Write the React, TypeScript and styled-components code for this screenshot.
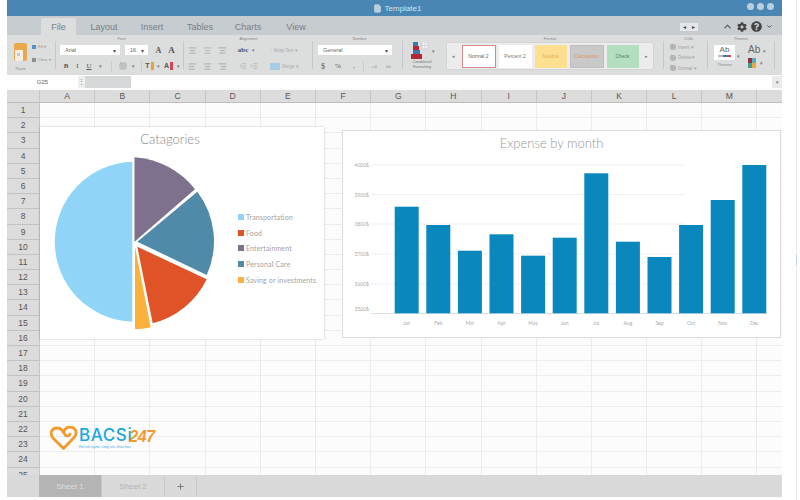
import styled, { createGlobalStyle } from "styled-components";
import { AlignCenter, AlignLeft, AlignRight, ChevronDown, ChevronUp, FileText, Grid3x3, IndentDecrease, IndentIncrease, Plus, Table } from "lucide-react";
import { FaCog, FaQuestionCircle } from "react-icons/fa";

const GlobalStyle = createGlobalStyle`
  html, body {
    margin: 0;
    padding: 0;
    background: #fff;
  }
  * {
    box-sizing: border-box;
  }
`;

const TABS = ["Layout", "Insert", "Tables", "Charts", "View"];
const COLUMNS = ["A", "B", "C", "D", "E", "F", "G", "H", "I", "J", "K", "L", "M", ""];
const ROWS = Array.from({ length: 25 }, (_, i) => i + 1);

const LEGEND = [
  { label: "Transportation", color: "#90d5f7" },
  { label: "Food", color: "#df5327" },
  { label: "Entertainment", color: "#7d718d" },
  { label: "Personal Care", color: "#4f8aa8" },
  { label: "Saving or investments", color: "#fbb03b" },
];

const STYLES = [
  { label: "Normal 2", bg: "#fff", fg: "#666", border: "#cf8a8a", width: 34 },
  { label: "Percent 2", bg: "#fff", fg: "#777", border: "#fff", width: 33 },
  { label: "Neutral", bg: "#fcdf90", fg: "#e6b04e", border: "#fcdf90", width: 32 },
  { label: "Calculation", bg: "#c9c9c9", fg: "#e0945e", border: "#bdbdbd", width: 34 },
  { label: "Check", bg: "#b3dfc0", fg: "#4f8565", border: "#b3dfc0", width: 32 },
];

// top of each bar, in page pixels
const BARS = [
  { month: "Jan", top: 206.7 },
  { month: "Feb", top: 225 },
  { month: "Mar", top: 250.7 },
  { month: "Apr", top: 234.3 },
  { month: "May", top: 255.7 },
  { month: "Jun", top: 237.7 },
  { month: "Jul", top: 173.3 },
  { month: "Aug", top: 241.7 },
  { month: "Sep", top: 257 },
  { month: "Oct", top: 225 },
  { month: "Nov", top: 200 },
  { month: "Dec", top: 165 },
];

const TICKS = [
  { label: "4000$", y: 165 },
  { label: "3900$", y: 194.5 },
  { label: "3800$", y: 224 },
  { label: "3700$", y: 254 },
  { label: "3600$", y: 284 },
  { label: "3500$", y: 309 },
];

const App = () => {
  return (
    <Page>
      <GlobalStyle />
      <Window>
        <TitleBar>
          <TitleText>
            <FileText size={9} fill="#b9cfdf" color="#b9cfdf" />
            Template1
          </TitleText>
          <Dots>
            <Dot />
            <Dot />
            <Dot />
          </Dots>
        </TitleBar>

        <TabBar>
          <ActiveTab>File</ActiveTab>
          {TABS.map((tab) => (
            <Tab key={tab}>{tab}</Tab>
          ))}
          <TabTools>
            <Pager>
              <span>◂</span>
              <span>▸</span>
            </Pager>
            <ChevronUp size={11} color="#555" strokeWidth={2.5} />
            <FaCog size={10} color="#444" />
            <FaQuestionCircle size={11} color="#444" />
            <ChevronDown size={7} color="#444" strokeWidth={3} />
          </TabTools>
        </TabBar>

        <Ribbon>
          <Group $w={42}>
            <ClipRow>
              <PasteBox>
                <svg width="13" height="19" viewBox="0 0 13 19">
                  <rect x="0" y="0" width="13" height="18" rx="2" fill="#eaa84e" />
                  <rect x="1" y="7" width="8" height="11" fill="#f1eee6" />
                  <rect x="3" y="10" width="3" height="3" fill="#bcc6d4" />
                </svg>
                <Tiny>Paste</Tiny>
              </PasteBox>
              <ClipActions>
                <ClipAction>
                  <Swatch $color="#5b8fc7" />
                  Fill ▾
                </ClipAction>
                <ClipAction>
                  <Swatch $color="#8a8f96" />
                  Clear ▾
                </ClipAction>
              </ClipActions>
            </ClipRow>
          </Group>
          <Sep />

          <Group $w={127}>
            <GroupLabel>Font</GroupLabel>
            <ToolRow>
              <Select $w={60}>
                Arial<b>▾</b>
              </Select>
              <Slot $w={5} />
              <Select $w={23}>
                16<b>▾</b>
              </Select>
              <Slot $w={4} />
              <Slot $w={13}>
                <Glyph $size={8}>A</Glyph>
              </Slot>
              <Slot $w={13}>
                <Glyph $size={9}>A</Glyph>
              </Slot>
            </ToolRow>
            <ToolRow>
              <Slot $w={12}><Glyph $size={7}>B</Glyph></Slot>
              <Slot $w={11}><Glyph $size={7} $weight={400}>I</Glyph></Slot>
              <Slot $w={12}><Glyph $size={7} $weight={400} $line>U</Glyph></Slot>
              <Slot $w={10}><Caret>▾</Caret></Slot>
              <Slot $w={13}><MiniSep /></Slot>
              <Slot $w={10}><Grid3x3 size={8} color="#aaa" /></Slot>
              <Slot $w={10}><Caret>▾</Caret></Slot>
              <Slot $w={7}><MiniSep /></Slot>
              <Slot $w={9}><ColorMark $color="#f0a030">T</ColorMark></Slot>
              <Slot $w={9}><Caret>▾</Caret></Slot>
              <Slot $w={11}><ColorMark $color="#d8434f">A</ColorMark></Slot>
              <Slot $w={8}><Caret>▾</Caret></Slot>
            </ToolRow>
          </Group>
          <Sep />

          <Group $w={128} $pad={1}>
            <GroupLabel>Alignment</GroupLabel>
            <ToolRow>
              <Slot $w={15}><AlignCenter size={9} color="#999" /></Slot>
              <Slot $w={15}><AlignCenter size={9} color="#aaa" /></Slot>
              <Slot $w={14}><AlignCenter size={9} color="#999" /></Slot>
              <Slot $w={6} />
              <Slot $w={16}><Glyph $size={7}>abc</Glyph></Slot>
              <Slot $w={5}><Caret>▾</Caret></Slot>
              <Slot $w={14} />
              <Faded>↑ Wrap Text ▾</Faded>
            </ToolRow>
            <ToolRow>
              <Slot $w={15}><AlignLeft size={9} color="#999" /></Slot>
              <Slot $w={15}><AlignCenter size={9} color="#999" /></Slot>
              <Slot $w={14}><AlignRight size={9} color="#999" /></Slot>
              <Slot $w={8} />
              <Slot $w={11}><IndentDecrease size={8} color="#aaa" /></Slot>
              <Slot $w={11}><IndentIncrease size={8} color="#aaa" /></Slot>
              <Slot $w={11} />
              <MergeIcon />
              <Faded>Merge ▾</Faded>
            </ToolRow>
          </Group>
          <Sep />

          <Group $w={89}>
            <GroupLabel>Number</GroupLabel>
            <ToolRow>
              <Slot $w={1} />
              <Select $w={74}>
                General<b>▾</b>
              </Select>
            </ToolRow>
            <ToolRow>
              <Slot $w={12}><Glyph $size={8} $weight={400}>$</Glyph></Slot>
              <Slot $w={18}><Glyph $size={7} $weight={400}>%</Glyph></Slot>
              <Slot $w={14}><Glyph $size={7} $weight={400}>,</Glyph></Slot>
              <Slot $w={4}><MiniSep /></Slot>
              <Slot $w={18}><Tiny>+.0</Tiny></Slot>
              <Slot $w={10}><Tiny>.00</Tiny></Slot>
            </ToolRow>
          </Group>
          <Sep />

          <CondGroup>
            <CondIcon>
              <svg width="20" height="18" viewBox="0 0 20 18">
                <rect x="4" y="0" width="5" height="4" fill="#3d79b0" />
                <rect x="4" y="4" width="6" height="4" fill="#b8262f" />
                <rect x="4" y="8" width="7" height="4" fill="#3d79b0" />
                <rect x="2" y="12" width="11" height="5" fill="#b8262f" />
                <path d="M13 0h6v7h-6zM16 0v7M13 3.5h6" fill="#f4f4f4" stroke="#bbb" strokeWidth="0.5" />
              </svg>
              <Caret>▾</Caret>
            </CondIcon>
            <CondLabel>
              Conditional
              <br />
              Formatting
            </CondLabel>
          </CondGroup>

          <StyleWrap>
            <GroupLabel>Format</GroupLabel>
            <StyleBox>
              <Caret>◂</Caret>
              <StyleList>
                {STYLES.map((style) => (
                  <StyleItem
                    key={style.label}
                    $bg={style.bg}
                    $fg={style.fg}
                    $border={style.border}
                    $w={style.width}
                  >
                    {style.label}
                  </StyleItem>
                ))}
              </StyleList>
              <Caret>▸</Caret>
            </StyleBox>
          </StyleWrap>
          <Sep />

          <CellsGroup>
            <GroupLabel>Cells</GroupLabel>
            <CellAction><Table size={6} color="#888" /> Insert ▾</CellAction>
            <CellAction><Table size={6} color="#888" /> Delete ▾</CellAction>
            <CellAction><Table size={6} color="#888" /> Format ▾</CellAction>
          </CellsGroup>
          <Sep />

          <ThemesGroup>
            <GroupLabel>Themes</GroupLabel>
            <ThemesRow>
              <div>
                <ThemeBox>
                  Ab
                  <ThemeStrip />
                </ThemeBox>
                <Tiny>Themes</Tiny>
              </div>
              <Caret>▾</Caret>
              <ThemeSide>
                <AbStyle>
                  Ab <Caret>▾</Caret>
                </AbStyle>
                <PaletteRow>
                  <Palette>
                    <Swatch $color="#9c2b45" />
                    <Swatch $color="#4fb0b5" />
                    <Swatch $color="#3f9f8f" />
                    <Swatch $color="#f0a73a" />
                  </Palette>
                  <Caret>▾</Caret>
                </PaletteRow>
              </ThemeSide>
            </ThemesRow>
          </ThemesGroup>
          <Sep />
        </Ribbon>

        <FormulaBar>
          <NameBox>G25</NameBox>
          <Spinner>⋮</Spinner>
          <FormulaGap />
          <FormulaInput />
          <FormulaButton>▾</FormulaButton>
        </FormulaBar>

        <SheetArea>
          <Grid>
            <HeadCell />
            {COLUMNS.map((col, i) => (
              <HeadCell key={i}>{col}</HeadCell>
            ))}
            {ROWS.map((row) =>
              [row.toString(), ...COLUMNS].map((_, i) =>
                i === 0 ? <RowHead key={`${row}-h`}>{row}</RowHead> : <Cell key={`${row}-${i}`} />
              )
            )}
          </Grid>

          <PieCard>
            <PieTitle>Catagories</PieTitle>
            <PieBody>
              <svg width="190" height="188" viewBox="41 151 190 188">
                <path d="M132.3 161.7 A80.04 80.04 0 0 0 132.3 321.7 Z" fill="#90d5f7" />
                <path d="M134.5 241.7 L134.5 157.3 A84 84 0 0 1 195 189.3 Z" fill="#7d718d" />
                <path d="M137.3 241.7 L197.3 191.7 A82 82 0 0 1 206.7 275 Z" fill="#4f8aa8" />
                <path d="M137.3 246.7 L206.7 279.3 A82 82 0 0 1 152.7 323.3 Z" fill="#df5327" />
                <path d="M135 246.7 L150.7 327.3 A82 82 0 0 1 135 329.3 Z" fill="#fbb03b" />
              </svg>
              <Legend>
                {LEGEND.map((item) => (
                  <LegendItem key={item.label}>
                    <LegendMark $color={item.color} />
                    {item.label}
                  </LegendItem>
                ))}
              </Legend>
            </PieBody>
          </PieCard>

          <BarCard>
            <BarTitle>Expense by month</BarTitle>
            <svg width="437" height="180" viewBox="343 157 437 180">
              {TICKS.map((tick, i) => (
                <g key={tick.label}>
                  {i < TICKS.length - 1 && (
                    <line x1="371" x2="685" y1={tick.y} y2={tick.y} stroke="#eeeff1" />
                  )}
                  <AxisText x="369" y={tick.y + 2} textAnchor="end">
                    {tick.label}
                  </AxisText>
                </g>
              ))}
              <line x1="371" x2="767" y1="313.5" y2="313.5" stroke="#d8dde2" />
              {BARS.map((bar, i) => {
                const x = 394.7 + i * 31.6;
                return (
                  <g key={bar.month}>
                    <rect x={x} y={bar.top} width="24" height={313.3 - bar.top} fill="#0a88bd" />
                    <AxisText x={x + 12} y="325" textAnchor="middle">
                      {bar.month}
                    </AxisText>
                  </g>
                );
              })}
            </svg>
          </BarCard>

          <Logo>
            <svg width="28" height="24" viewBox="0 0 28 24">
              <path
                d="M13.5 22.5 L3 12 C-1 7 2 2 7 2 C10 2 12 3.5 13 6 M13.5 22.5 L24.5 11 C28 6 25 1 20 1 C15.5 1 13 5 14.5 8 C15.5 10.5 19 10.5 20 8"
                fill="none"
                stroke="#f39a2d"
                strokeWidth="2.8"
                strokeLinecap="round"
              />
            </svg>
            <LogoText>
              <LogoName>BACSi</LogoName>
              <LogoTag>Kết nối người cùng sức khỏe bạn</LogoTag>
            </LogoText>
            <LogoNumber>247</LogoNumber>
          </Logo>
        </SheetArea>

        <SheetTabs>
          <TabSpacer />
          <SheetTab $active>Sheet 1</SheetTab>
          <SheetTab>Sheet 2</SheetTab>
          <AddSheet>
            <Plus size={9} color="#777" strokeWidth={2.5} />
          </AddSheet>
        </SheetTabs>
      </Window>
      <EdgeLine />
    </Page>
  );
};

const Page = styled.div`
  display: flex;
  width: 800px;
  height: 500px;
  overflow: hidden;
  padding-left: 7px;
`;

const EdgeLine = styled.div`
  flex: none;
  width: 1px;
  height: 500px;
  margin-left: 14px;
  background: linear-gradient(#e9ebed 0 255px, #c3d2dd 255px 265px, #e9ebed 265px);
`;

const Window = styled.div`
  flex: none;
  display: flex;
  flex-direction: column;
  width: 775px;
  height: 497px;
  overflow: hidden;
  font-family: "Liberation Sans", Arial, sans-serif;
  background: #fcfcfd;
`;

const TitleBar = styled.div`
  position: relative;
  flex: 0 0 16px;
  display: flex;
  align-items: center;
  justify-content: center;
  background: #4a86b3;
`;

const TitleText = styled.div`
  display: flex;
  align-items: center;
  gap: 3px;
  margin-left: 5px;
  font-size: 8px;
  color: #d4e2ec;
`;

const Dots = styled.div`
  position: absolute;
  right: 8px;
  top: 3px;
  display: flex;
  gap: 3px;
`;

const Dot = styled.span`
  width: 7px;
  height: 7px;
  border-radius: 50%;
  background: #b8cfdf;
`;

const TabBar = styled.div`
  flex: 0 0 19px;
  display: flex;
  align-items: flex-end;
  padding-left: 34px;
  background: #c6cccf;
`;

const Tab = styled.div`
  width: 48px;
  height: 17px;
  display: flex;
  align-items: center;
  justify-content: center;
  font-size: 9px;
  color: #7a7f83;
`;

const ActiveTab = styled(Tab)`
  width: 35px;
  margin-right: 4px;
  background: #dcdddd;
  border-radius: 2px 2px 0 0;
`;

const TabTools = styled.div`
  display: flex;
  align-items: center;
  gap: 4px;
  height: 17px;
  margin-left: auto;
  padding-right: 9px;
`;

const Pager = styled.div`
  display: flex;
  justify-content: space-around;
  width: 18px;
  height: 8px;
  margin-right: 20px;
  font-size: 6px;
  line-height: 8px;
  color: #444;
  background: #e4e6e7;
`;

const Ribbon = styled.div`
  flex: 0 0 40px;
  display: flex;
  padding-left: 6px;
  background: #dcdddd;
`;

const Group = styled.div<{ $w: number; $pad?: number }>`
  width: ${(p) => p.$w}px;
  flex: none;
  padding-left: ${(p) => p.$pad ?? 4}px;
`;

const GroupLabel = styled.div`
  height: 7px;
  font-size: 4px;
  line-height: 7px;
  text-align: center;
  color: #888;
`;

const Sep = styled.div`
  flex: none;
  width: 1px;
  height: 28px;
  margin-top: 6px;
  background: #c3c8cb;
`;

const MiniSep = styled.span`
  display: block;
  width: 1px;
  height: 11px;
  background: #c8ccce;
`;

const ToolRow = styled.div`
  display: flex;
  align-items: center;
  height: 16px;
`;

const Slot = styled.div<{ $w: number }>`
  flex: none;
  display: flex;
  align-items: center;
  justify-content: center;
  width: ${(p) => p.$w}px;
`;

const Select = styled.div<{ $w: number }>`
  flex: none;
  display: flex;
  align-items: center;
  justify-content: space-between;
  width: ${(p) => p.$w}px;
  height: 10px;
  padding: 0 4px 0 5px;
  font-size: 5.5px;
  color: #666;
  background: #fff;

  b {
    font-size: 6px;
    font-weight: 400;
    color: #555;
  }
`;

const Glyph = styled.span<{ $size: number; $weight?: number; $line?: boolean }>`
  font-family: "Liberation Serif", serif;
  font-size: ${(p) => p.$size}px;
  font-weight: ${(p) => p.$weight ?? 700};
  color: #555;
  text-decoration: ${(p) => (p.$line ? "underline" : "none")};
  white-space: nowrap;
`;

const AbStyle = styled.span`
  font-size: 10px;
  line-height: 11px;
  color: #666;
  white-space: nowrap;
`;

const Caret = styled.span`
  font-size: 5px;
  color: #777;
`;

const Tiny = styled.div`
  font-size: 4px;
  line-height: 5px;
  text-align: center;
  color: #888;
`;

const Faded = styled.span`
  font-size: 4.5px;
  color: #a8acaf;
  white-space: nowrap;
`;

const ColorMark = styled.span<{ $color: string }>`
  font-size: 7px;
  font-weight: 700;
  line-height: 8px;
  color: #555;
  border-right: 3px solid ${(p) => p.$color};
  padding-right: 1px;
`;

const MergeIcon = styled.span`
  width: 10px;
  height: 7px;
  margin-right: 2px;
  background: #a8cbe4;
`;

const ClipRow = styled.div`
  display: flex;
  gap: 5px;
  padding-top: 8px;
  margin-left: -3px;
`;

const PasteBox = styled.div`
  width: 13px;
`;

const ClipActions = styled.div`
  display: flex;
  flex-direction: column;
  gap: 8px;
  padding-top: 1px;
`;

const ClipAction = styled.div`
  display: flex;
  align-items: center;
  gap: 2px;
  font-size: 4px;
  line-height: 5px;
  color: #999;
  white-space: nowrap;
`;

const Swatch = styled.span<{ $color: string }>`
  display: block;
  width: 4px;
  height: 4px;
  background: ${(p) => p.$color};
`;

const CondGroup = styled.div`
  flex: none;
  width: 43px;
  padding: 7px 0 0 6px;
`;

const CondIcon = styled.div`
  display: flex;
  align-items: center;
  gap: 3px;
  height: 18px;
`;

const CondLabel = styled.div`
  width: 26px;
  font-size: 3.8px;
  line-height: 4.5px;
  text-align: center;
  color: #777;
`;

const StyleWrap = styled.div`
  flex: none;
  width: 208px;
  margin-right: 9px;
`;

const StyleBox = styled.div`
  display: flex;
  align-items: center;
  justify-content: space-between;
  height: 28px;
  padding: 0 5px;
  background: #ececec;
  border: 1px solid #d2d4d5;
`;

const StyleList = styled.div`
  display: flex;
  gap: 3px;
`;

const StyleItem = styled.div<{ $bg: string; $fg: string; $border: string; $w: number }>`
  display: flex;
  align-items: center;
  justify-content: center;
  width: ${(p) => p.$w}px;
  height: 23px;
  font-size: 5px;
  color: ${(p) => p.$fg};
  background: ${(p) => p.$bg};
  border: 1px solid ${(p) => p.$border};
`;

const CellsGroup = styled.div`
  flex: none;
  width: 43px;
  padding-left: 6px;
`;

const CellAction = styled.div`
  display: flex;
  align-items: center;
  gap: 2px;
  height: 10.5px;
  font-size: 4.5px;
  color: #a0a4a7;
  white-space: nowrap;
`;

const ThemesGroup = styled.div`
  flex: none;
  width: 66px;
`;

const ThemesRow = styled.div`
  display: flex;
  align-items: center;
  gap: 2px;
  padding: 2px 0 0 6px;
`;

const ThemeBox = styled.div`
  width: 21px;
  height: 15px;
  margin-bottom: 2px;
  padding-top: 1px;
  font-size: 8px;
  line-height: 8px;
  text-align: center;
  color: #666;
  background: #fff;
`;

const ThemeStrip = styled.div`
  width: 13px;
  height: 2px;
  margin: 1px auto 0;
  background: linear-gradient(90deg, #bbb 40%, #3d79b0 40%, #3d79b0 70%, #d8434f 70%);
`;

const ThemeSide = styled.div`
  display: flex;
  flex-direction: column;
  gap: 1px;
  margin-left: 6px;
`;

const PaletteRow = styled.div`
  display: flex;
  align-items: center;
  gap: 4px;
`;

const Palette = styled.div`
  display: grid;
  grid-template-columns: 4px 4px;
  gap: 0;

  span {
    height: 5px;
  }
`;

const FormulaBar = styled.div`
  flex: 0 0 12px;
  display: flex;
  margin-top: 1px;
  background: #d5d7d8;
`;

const NameBox = styled.div`
  width: 71px;
  font-size: 6px;
  line-height: 12px;
  text-align: center;
  color: #666;
  background: #fff;
`;

const Spinner = styled.div`
  width: 7px;
  font-size: 7px;
  line-height: 12px;
  text-align: center;
  color: #777;
  background: #eee;
`;

const FormulaGap = styled.div`
  width: 46px;
`;

const FormulaInput = styled.div`
  flex: 1;
  background: #fff;
`;

const FormulaButton = styled.div`
  width: 10px;
  font-size: 5px;
  line-height: 12px;
  text-align: center;
  color: #777;
  background: #eaeaea;
`;

const SheetArea = styled.div`
  position: relative;
  flex: 1;
  margin-top: 2px;
  overflow: hidden;
`;

const Grid = styled.div`
  display: grid;
  grid-template-columns: 33px repeat(14, 55.2px);
  grid-template-rows: 13px repeat(25, 15.2px);
  height: 100%;
  overflow: hidden;
`;

const HeadCell = styled.div`
  font-size: 8.5px;
  line-height: 13px;
  text-align: center;
  color: #555;
  background: #dcdcdc;
  border-right: 1px solid #c6c6c6;
  border-bottom: 1px solid #bdbdbd;
`;

const RowHead = styled.div`
  font-size: 8.5px;
  line-height: 15px;
  text-align: center;
  color: #555;
  background: #dcdcdc;
  border-right: 1px solid #c6c6c6;
  border-bottom: 1px solid #c2c2c2;
`;

const Cell = styled.div`
  border-right: 1px solid #ececef;
  border-bottom: 1px solid #ececef;
`;

const PieCard = styled.div`
  position: absolute;
  left: 33px;
  top: 37px;
  width: 284px;
  height: 212px;
  background: #fff;
  box-shadow: 0 0 2px rgba(0, 0, 0, 0.25);
`;

const PieTitle = styled.div`
  height: 24px;
  padding-right: 24px;
  font-family: Lato, sans-serif;
  font-size: 13px;
  font-weight: 300;
  line-height: 24px;
  text-align: center;
  color: #888;
`;

const PieBody = styled.div`
  display: flex;
  padding-left: 1px;
`;

const Legend = styled.div`
  display: flex;
  flex-direction: column;
  margin-left: 7px;
  padding-top: 58px;
`;

const LegendItem = styled.div`
  display: flex;
  align-items: center;
  gap: 2px;
  height: 15.75px;
  font-family: Lato, sans-serif;
  font-size: 7px;
  font-weight: 400;
  letter-spacing: 0.15px;
  color: #a2a2a2;
  white-space: nowrap;
`;

const LegendMark = styled.span<{ $color: string }>`
  width: 6px;
  height: 6px;
  background: ${(p) => p.$color};
`;

const BarCard = styled.div`
  position: absolute;
  left: 335px;
  top: 40px;
  width: 439px;
  height: 208px;
  background: #fff;
  border: 1px solid #d9dbdd;
`;

const BarTitle = styled.div`
  height: 26px;
  padding-right: 20px;
  font-family: Lato, sans-serif;
  font-size: 13px;
  font-weight: 300;
  line-height: 25px;
  text-align: center;
  color: #999;
`;

const AxisText = styled.text`
  font-family: Lato, sans-serif;
  font-size: 5px;
  fill: #aaa;
`;

const Logo = styled.div`
  position: absolute;
  left: 43px;
  top: 336px;
  display: flex;
  align-items: flex-start;
`;

const LogoText = styled.div`
  margin-left: 1px;
  padding-top: 1px;
`;

const LogoName = styled.div`
  font-family: Inter, sans-serif;
  font-size: 17px;
  font-weight: 500;
  line-height: 20px;
  margin-top: -2px;
  letter-spacing: 0.6px;
  color: #1ba6dc;
`;

const LogoTag = styled.div`
  font-size: 3.5px;
  line-height: 4px;
  color: #49a9d6;
  white-space: nowrap;
`;

const LogoNumber = styled.div`
  margin: 3px 0 0 -3px;
  font-family: "Liberation Sans", sans-serif;
  font-size: 16px;
  font-style: italic;
  font-weight: 700;
  line-height: 15px;
  letter-spacing: -0.5px;
  color: #f39a2d;
`;

const SheetTabs = styled.div`
  flex: 0 0 22px;
  display: flex;
  background: #d9d9d9;
`;

const TabSpacer = styled.div`
  width: 32px;
`;

const SheetTab = styled.div<{ $active?: boolean }>`
  display: flex;
  align-items: center;
  justify-content: center;
  width: 63px;
  font-size: 8px;
  color: ${(p) => (p.$active ? "#dedede" : "#b5b5b5")};
  background: ${(p) => (p.$active ? "#b4b4b4" : "#d9d9d9")};
  border-right: 1px solid #c8c8c8;
`;

const AddSheet = styled.div`
  display: flex;
  align-items: center;
  justify-content: center;
  width: 32px;
  border-right: 1px solid #c8c8c8;
`;

export default App;
